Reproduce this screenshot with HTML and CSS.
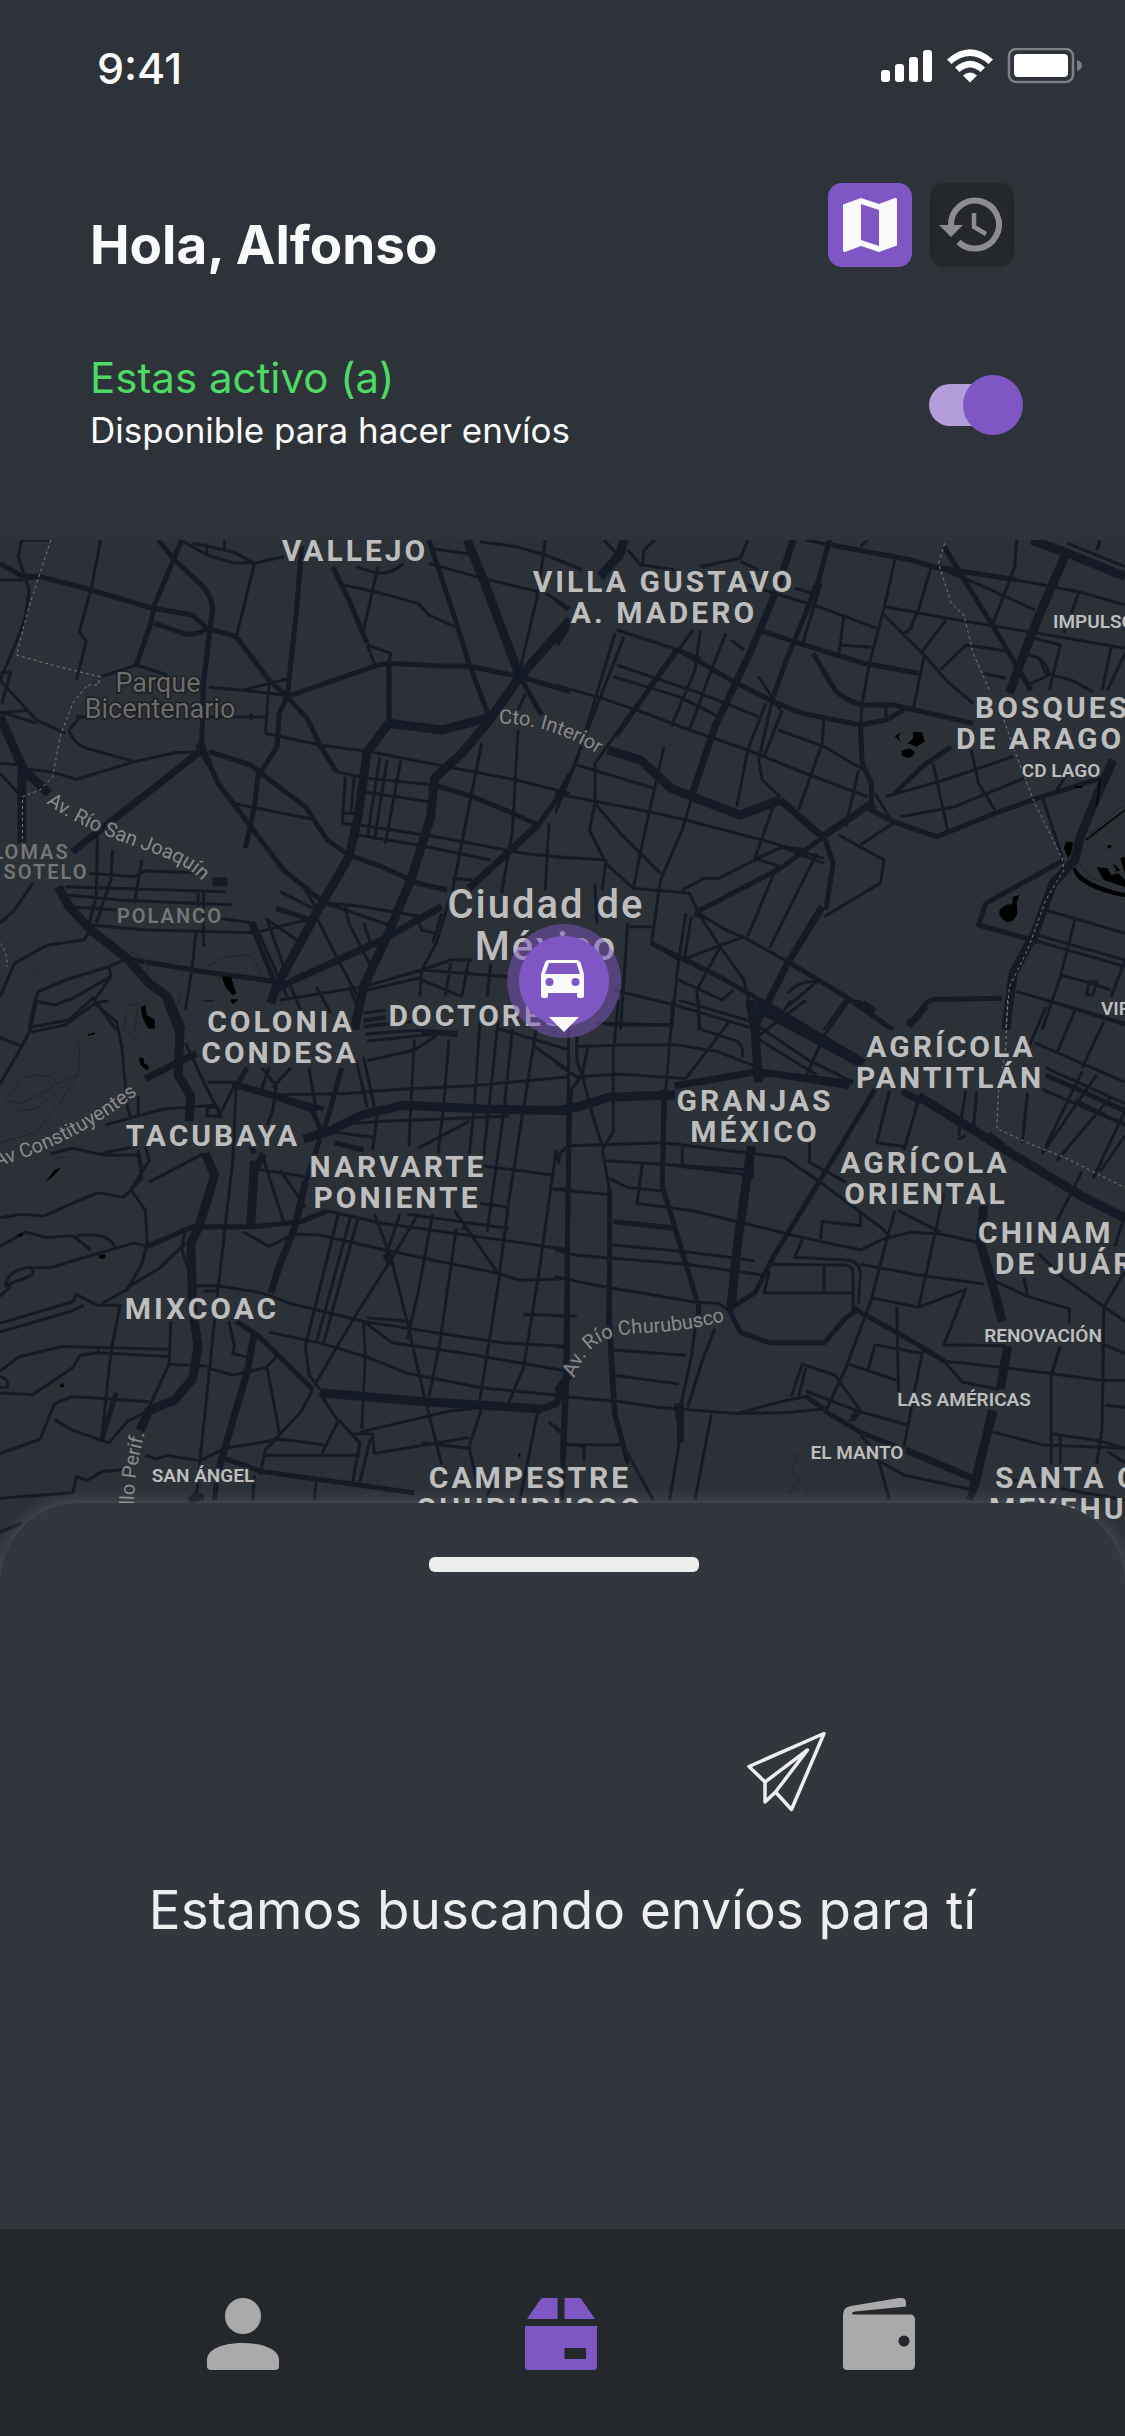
FILE: index.html
```html
<!DOCTYPE html>
<html lang="es">
<head>
<meta charset="utf-8">
<meta name="viewport" content="width=device-width, initial-scale=1">
<title>Envíos</title>
<link rel="stylesheet" href="styles.css">
</head>
<body>
<div class="app">
  <div class="status">
    <span class="status-time">9:41</span>
    <svg class="status-icons" viewBox="0 0 204 36" aria-hidden="true">
      <g fill="#fff">
        <rect x="1" y="22" width="9" height="12" rx="3"/>
        <rect x="15" y="16" width="9" height="18" rx="3"/>
        <rect x="29" y="9" width="9" height="25" rx="3"/>
        <rect x="43" y="2" width="9" height="32" rx="3"/>
        <path d="M67 11.500Q90 -9 113 11.500L108.500 16Q90 0 71.500 16Z"/>
        <path d="M75 19.500Q90 6 105 19.500L100.500 24Q90 15 79.500 24Z"/>
        <path d="M83 27.500Q90 21.500 97 27.500L90 34.500Z"/>
        <rect x="134" y="6" width="54" height="23" rx="4"/>
      </g>
      <rect x="129" y="1" width="64" height="33" rx="7" fill="none" stroke="#7d8086" stroke-width="2.500"/>
      <path d="M197 12Q202 14 202 17.500Q202 21 197 23Z" fill="#7d8086"/>
    </svg>
  </div>

  <header class="header">
    <div class="title-row">
      <h1 class="title">Hola, Alfonso</h1>
      <div class="view-buttons">
        <button class="view-btn view-btn-on" type="button" aria-label="Mapa">
          <svg viewBox="0 0 84 84"><path fill="#fafafa" d="M15 21.500 33 15 51 21 67 15Q69 14.500 69 16.500V62.500L51 69 33 63 17 69Q15 69.500 15 67.500ZM33 21V57L51 63V27Z"/></svg>
        </button>
        <button class="view-btn" type="button" aria-label="Historial">
          <svg viewBox="0 0 84 84"><g fill="none" stroke="#8e8c92" stroke-width="6"><path d="M21 43V42A24 24 0 1 1 28.500 59"/><path stroke-width="4.500" d="M44 30V44L56 51"/></g><path fill="#8e8c92" d="M9 42H33L21 54Z"/></svg>
        </button>
      </div>
    </div>
    <div class="state-row">
      <label class="state" for="active">
        <span class="state-name">Estas activo (a)</span>
        <span class="state-note">Disponible para hacer envíos</span>
      </label>
      <input class="switch" id="active" type="checkbox" role="switch" checked>
    </div>
  </header>

  <main class="main">
    <svg class="map" viewBox="0 540 1125 1060" preserveAspectRatio="xMidYMin slice" role="img" aria-label="Mapa de la Ciudad de México">
      <rect y="540" width="1125" height="1060" fill="#2c3037"/>

      <!-- north-west -->
      <svg x="0" y="530" width="570" height="500" viewBox="0 0 1568 1500" preserveAspectRatio="none">
        <g class="road w3">
          <path d="M60 30 50 80 80 180 70 260 40 350M60 30H140M277 30 250 180 218 305 237 335 210 450M700 100 650 320M505 35 570 75 640 98 700 100 780 80M568 40V75M530 40 640 65 700 100M617 30V60"/>
          <path d="M0 150 60 150 110 140M0 450 100 570 180 610M0 550 80 540M0 545 100 580M40 350 0 450M30 425 0 430M30 425 5 520"/>
          <path d="M280 440 375 405 460 435M1040 110 1000 300M945 165 1030 185 1150 220 1180 255 1250 290M1035 130 980 110M1040 130Q1080 130 1110 100M1180 55 1290 72M1180 100 1310 140 1480 185M1320 35 1420 50 1500 75 1568 105M1500 30 1480 190 1430 420M1500 190 1568 235"/>
          <path d="M1010 345 1075 370 1070 400M1010 345 1030 400M575 472 680 482 780 495M660 482 790 447M740 460 730 610M570 560H735M690 550V570M730 610 880 645 1020 665 1230 710 1420 750 1568 790"/>
          <path d="M220 560 190 600Q200 640 240 655L370 695 480 668 560 665M370 695 210 748 140 725 70 718M0 700 60 705M0 730 60 800M210 560 250 560"/>
          <path d="M925 725 1010 745 1195 765M950 740 942 880 990 888M975 740 965 850M945 850 985 850M1045 680 1010 925M1065 690 1030 930M1103 690 1060 940M1000 785 1180 815M990 885 1200 920 1440 970 1568 985M985 915 1150 945 1350 990M640 820 870 870"/>
          <path d="M1325 640 1290 830 1245 1080M1425 600 1410 900 1380 1090M1445 490 1425 540M1510 880 1500 1080M1245 1045 1300 1050M1245 1080 1200 1240 1160 1320"/>
          <path d="M268 910 265 1100 240 1200M310 960 305 1050 265 1180M390 990 370 1120M245 1030 370 1040 400 1022 560 1030M180 1070 620 1085M185 1095 330 1110 640 1125M190 1130 320 1140M560 1085 560 1250M545 1090 545 1130M600 1165 700 1180 790 1400M735 1170 790 1340M730 1165 830 1240M770 1085 870 1140M840 1080 880 1150M910 1120 1000 1130 1160 1160M910 1125 1070 1185M870 1160 930 1290 985 1400M950 1130 960 1180 1030 1330M1000 1180 1020 1240M1150 1170 1160 1200 1195 1210M1215 1150 1190 1240"/>
          <path d="M0 1180 40 1140 90 1060M0 1400 40 1300 130 1245 230 1230 250 1200M340 1290 300 1310 180 1350 105 1385 90 1440 80 1500M300 1310 305 1340 200 1405 150 1425 105 1415M305 1340 260 1410 300 1470 320 1500M260 1400 190 1470 90 1490"/>
          <path d="M250 1185 400 1200 700 1208 860 1165M540 1200 530 1300 510 1440M770 1410 1000 1370 1160 1320 1240 1290 1300 1290M1160 1320 1400 1340M1010 1380 1150 1345 1270 1400M1160 1320 1155 1400M1240 1300 1225 1400M1290 1290 1270 1400M1350 1300 1340 1400M800 1370 850 1500M870 1370 910 1450M960 1370 980 1420"/>
          <path d="M1000 1450 1060 1440M1000 1470 1060 1460M1000 1490 1060 1480"/>
        </g>
        <g class="road w5">
          <path d="M435 30 480 90 550 160Q585 200 585 240L575 320 560 460 555 640 575 700 600 760 690 890 780 1020 870 1100 910 1125M500 30 425 225 415 280 375 405M425 280 510 312Q550 315 570 295"/>
          <path d="M0 100 60 138 110 140 190 162 250 180 420 235 530 255 570 295 650 320 740 450 790 500 845 565 880 645 925 725"/>
          <path d="M790 500 1040 405 1070 400 1200 407 1290 408 1430 440 1568 485M1180 30 1250 260 1290 400 1345 560M915 110 960 210 1010 340M830 50 815 250 790 500 768 550 762 650 710 740 700 830 675 955M1070 400V580"/>
          <path d="M575 665 690 705 760 765 840 830 900 930 960 975 1050 1010 1150 1060 1230 1080M1430 440 1490 555M1195 765 1300 800 1400 845 1480 885 1530 810 1568 730"/>
          <path d="M340 1285 560 1325 760 1355M690 1180 760 1370M760 1135 870 1175"/>
        </g>
        <g class="road w7">
          <path d="M555 660 440 760 310 870 200 965M1480 885 1330 1035 1290 1075M1215 1130 1050 1230 930 1290 800 1355 760 1380M545 640 575 700"/>
        </g>
        <g class="road w9">
          <path d="M1285 30 1330 150 1430 440M1568 270 1430 440 1340 580 1270 670 1195 745 1185 860 1130 1050 1060 1230 1000 1370 975 1500M1340 565 1215 600 1070 580 1010 665 985 860 960 980 870 1150 800 1290 760 1370 745 1420M0 560 65 720 135 790M60 720V940M160 1070 190 1130 250 1200 350 1285 410 1360 460 1400 500 1500"/>
          <path d="M585 1055H625"/>
        </g>
        <g class="border"><path d="M140 30 80 230 45 375 160 410 275 440 270 465 240 465 200 520 165 620 145 740 110 780 62 800V940M0 1240Q20 1260 20 1310"/></g>
        <g class="water"><path d="M610 1340H635L650 1390 640 1395 620 1370ZM635 1408H655L645 1418 635 1415ZM388 1430 400 1425 403 1455 425 1470V1495H408L392 1460Z"/></g>
        <g class="trail"><path d="M570 1310 620 1280 690 1275 720 1330M340 1430 380 1420 370 1500M80 1310 105 1330M350 1260 400 1290 410 1320 370 1350M480 1370 500 1390 490 1420"/></g>
      </svg>

      <!-- north-east -->
      <svg x="555" y="530" width="570" height="500" viewBox="0 0 1568 1500" preserveAspectRatio="none">
        <g class="road w3">
          <path d="M0 85 75 120M135 30 185 90M275 30 245 60 240 110M200 60 240 110M240 105 330 120M400 110 510 85 530 30M510 95 560 120M0 210 35 240M530 165 725 230 885 295M660 175 710 190 730 165 680 345M715 165 660 330"/>
          <path d="M840 50 860 30M690 30 760 45M935 90 905 235 865 400 845 520 840 590M910 230 1080 265 1330 310 1568 355M905 255 1020 380 1080 455 1150 520M1035 110 1000 240 970 310M985 290 960 310M795 255 780 380M785 345 870 352M1075 270 1010 365M1130 345 1060 420M1130 345 1240 362M1015 380 985 540"/>
          <path d="M1040 105 1200 180 1320 240M1270 30 1265 110 1205 280M1270 150 1440 185 1568 225M1440 190 1400 310M1500 30 1490 60M1410 40 1568 110M1320 325 1390 345 1360 480M1300 375Q1350 380 1360 435L1300 465M1330 380 1350 430 1420 450 1480 485M1530 350 1505 480M1568 370 1520 480M1180 430 1240 445M1280 430 1305 480"/>
          <path d="M170 300 340 360 400 385M165 310 60 690 0 850M190 320 100 570 30 770M170 405 400 490 560 560M160 440 340 500 450 560M330 360 240 500 110 700 110 820M380 300 300 420 170 620M400 300 385 420 320 590M470 310 430 420 370 600M485 330 520 360"/>
          <path d="M0 465 130 505 250 550 370 600 530 660 700 735 860 800M60 705 275 775M20 795 260 845 360 870 570 930 740 985M110 820 95 900 140 1000 220 1080M110 820 180 910 290 1030M0 980 140 990 130 1080"/>
          <path d="M560 440 620 540M580 520 530 660 500 830M640 380 600 500 560 690 570 750 620 800M625 540 575 680M615 600 740 650 850 720M740 560 735 640 670 840M275 770 240 940 215 1080M380 790 350 900 290 1050 265 1240M300 650 275 770M600 830 550 985 620 1010M550 985 630 950M620 950 740 1000"/>
          <path d="M215 1075 370 1090 395 1150M350 1080 410 1045 450 1045 550 990 625 950 700 960M720 970 590 1255M610 1010 530 1220M835 720 800 890M880 790 930 880 840 945M780 915 905 990 895 1060 740 1160M910 800 1070 750 1260 680M950 860 1100 830 1290 745M1040 700 1080 900M1145 660 1165 760 1210 840M1340 800 1395 980M1380 780 1410 730M910 560 910 530"/>
          <path d="M1350 1140 1568 1210M1430 1170 1390 1340 1340 1500M1330 1235 1568 1310M1310 1210 1568 1290M1390 1335 1460 1355 1530 1380M1470 1355H1490L1480 1395H1462ZM1568 1290 1530 1400M1270 1385 1400 1425 1568 1480"/>
          <path d="M395 1150 470 1200 525 1225 640 1295M360 1150 340 1290M375 1160 355 1290M520 1220 360 1285M460 1240 390 1380M395 1150 460 1260 520 1350 550 1500M340 1350 460 1410 490 1380M390 1380 400 1500M205 1190H265M340 1290 320 1500M200 1180 180 1500M115 1180 110 1060M265 1240 340 1290M640 1390Q670 1350 720 1355L640 1430M110 1480 320 1485M160 1380 330 1425 560 1500M800 1410 740 1500"/>
        </g>
        <g class="road w5">
          <path d="M755 30 720 170 640 380 600 500M560 300 700 350 850 400 1000 430M710 370 770 480Q800 515 850 525L930 525 1150 580M340 360 500 460 600 515 680 550 840 585 910 570 960 540M840 585 845 700 870 760 870 830M760 45 980 90 1040 110 1270 150M1070 50 1200 280 1310 480M935 790 1010 710 1090 650M870 840 930 875 1050 920 1210 850 1340 800 1500 745M740 920 620 1015 400 1140M1400 990 1185 1120 1165 1185 1330 1235"/>
          <path d="M640 1295 800 1400 930 1500M740 920 765 1000 745 1140M975 1490 1020 1420Q1030 1408 1060 1408L1230 1405M0 790 20 790M265 1240 460 1345 580 1420 700 1500"/>
        </g>
        <g class="road w7">
          <path d="M655 30 610 180 540 360 440 590 375 800M620 810 735 920 790 880 870 820M735 1130 690 1210 640 1300 580 1430 545 1500M845 1420 880 1445M970 1485 985 1470"/>
        </g>
        <g class="road w9">
          <path d="M190 30 180 70 125 140M30 290 0 340M145 660 235 690 320 775 400 810 510 855 620 810M1310 30 1400 65 1568 140M1410 60 1330 260 1280 400 1250 490M1535 690 1490 800 1445 920 1430 990 1370 1060 1320 1210 1260 1330 1240 1500M860 815 875 840M385 1145 400 1150"/>
        </g>
        <g class="border"><path d="M1072 40 1055 100 1090 220 1125 255 1150 370 1195 480M1235 570 1270 680 1320 820 1395 985 1400 1020 1350 1110 1300 1260 1250 1370 1240 1500"/></g>
        <g class="water">
          <path d="M985 605 1010 607 1017 635 995 650 970 640 985 625ZM935 620 950 607 945 622 952 635ZM952 662 975 655 990 665 985 678 970 685 955 678ZM1405 935 1425 935 1420 970 1412 985 1400 955ZM1260 1100 1278 1095 1270 1115 1272 1150Q1265 1175 1245 1177 1222 1165 1222 1145 1228 1125 1258 1122ZM1430 1010Q1450 1060 1568 1090V1102Q1440 1075 1425 1020ZM1490 1012 1520 1015 1530 1035 1550 1030 1568 1050V1072L1510 1050ZM1535 1000 1555 1020 1545 1025ZM1555 985 1568 980V1030ZM1520 945H1530V955H1520ZM1430 768H1450V774H1430Z"/>
          <path class="shore" d="M1460 930 1568 840M1500 745 1490 830"/>
        </g>
        <g class="trail"><path d="M1445 1000Q1460 1040 1500 1055M1475 910 1568 820"/></g>
      </svg>

      <!-- south-west -->
      <svg x="0" y="1000" width="570" height="560" viewBox="0 0 1568 1568" preserveAspectRatio="none">
        <g class="road w3">
          <path d="M100 0 85 80 60 130 0 235M0 105 60 130M85 90 180 70 260 10 320 60 335 130 350 300 360 330 450 305 590 295M380 270V320M300 0 260 10M360 330 290 350"/>
          <path d="M510 120 570 250 610 330M570 230H650L600 330M570 300H600V325H570ZM650 240 640 450 600 810M680 190 650 240M720 190 760 240 750 310 735 350M740 190 720 250M800 190 750 245M850 190 870 310M1000 160 1030 300M980 170 1010 300"/>
          <path d="M1000 60 1060 50M1005 75 1130 60M1005 95 1150 85 1260 90M1010 115 1200 95M1010 170 1140 140 1200 100M1160 90 1260 100M1140 110 1130 300 1125 410M1235 110 1220 300 1205 430M1320 60 1305 300 1290 440M1370 60 1345 300 1330 440M1410 80 1385 320 1340 650M1475 80 1450 240 1400 560 1370 800 1320 1120M1370 80 1568 140M1470 130 1568 200M760 265 950 262 1100 250 1300 240 1568 215"/>
          <path d="M920 350 1040 340 1300 330 1400 325M920 370 1030 385M1040 300 1025 420M1150 415 1290 340M1530 420 1480 780 1440 1030 1400 1125M1568 410Q1540 420 1530 450M1330 465 1520 490M1520 530H1568M1320 570 1400 580"/>
          <path d="M0 610 60 600 120 605 220 560 270 540 340 552 390 500 380 435 290 435 200 415 140 430M380 420 390 470M400 410 410 450 360 530 400 590 405 680 390 740 350 810 280 850M410 510 560 430M405 690 370 680 200 730 140 750 70 750Q20 760 15 800L90 770V750M0 690 70 650 130 665 200 660 250 700M210 660Q300 650 315 690M0 830 30 800"/>
          <path d="M510 640 500 700 530 790M510 680 440 750 350 805M280 430 370 410M670 650 740 690 800 660M800 655 880 658 1060 700 1200 730 1370 765 1430 785 1568 780M590 0 560 0M720 430 780 620M770 475 840 580M715 475 840 495"/>
          <path d="M930 600 840 970 850 1050 880 1090M965 605 870 960M985 610 890 960M900 590 1050 625 1230 650 1568 700M1100 600 1060 720M1150 600 1080 720 980 880 870 1070M1030 600 1075 720 1120 900 1160 1080 1215 1300M1190 600 1150 820 1120 950M1255 640 1210 960 1180 1110M1250 590 1370 765M1120 600 1400 640M1290 640 1270 640"/>
          <path d="M540 800 600 800 720 820 800 850 1000 900 1380 960 1568 970M560 815 600 815M740 930 880 960 1010 1000 1120 1045 1320 1085 1568 1110M1010 890 1130 900M1000 900 1080 960 1280 990 1568 1040M1440 880 1568 885M1000 900 1005 1000 995 1200M630 900 645 970 640 990 680 1000M570 1030 640 1050 730 1030 760 1000M735 1030 770 1220"/>
          <path d="M0 905 200 845 210 825 270 855H330L310 960 300 1030 280 1230M0 930 200 870 230 855M470 900 465 1020M0 1040 50 1000 170 970 465 978M0 1100 90 1105 200 1030 220 995 270 988 465 998M270 970V990M0 1055Q25 1060 20 1085H0M465 1020 570 1025M465 1020 410 1140M0 1270 110 1230 150 1130 200 1110 410 1125M150 1175 200 1205 300 1240 350 1180 410 1150"/>
          <path d="M0 1395 200 1380 210 1335 240 1345 280 1320 340 1315M400 1275 430 1285 460 1275 550 1290 620 1255 770 1230 890 1245M600 800 580 1000 550 1290 540 1400M520 1400 545 1370M700 1330 695 1400M870 1350 865 1400M730 1275H990M860 1090 830 1150 730 1260 715 1330M880 1100 930 1180 885 1270M930 1175 990 1240 970 1350M1020 1225 990 1350M970 1215H1025L1030 1270 1290 1225M990 1210 1240 1150 1300 1145M1160 1240 1290 1255M1330 1130 1290 1250 1310 1340M1480 1150 1430 1400M1510 1180 1540 1210M0 1490 60 1465M1340 1390 1360 1340"/>
        </g>
        <g class="road w5">
          <path d="M640 235 760 270 890 305M680 190 650 240M940 190 910 300 890 370M850 290 890 380M560 430 590 490 570 560 545 640M530 635 405 690M530 635 700 635 830 620 900 590M700 430 690 410M840 510 810 640 770 740 745 820M700 930 680 1040 600 1320 590 1400M650 900 710 940 860 1090M720 1320 860 1340 1140 1380M620 1285 720 1320M920 400 1000 420M880 390 840 510"/>
          <path d="M1568 0 1560 1050 1545 1400M320 1100 280 1230"/>
        </g>
        <g class="road w7">
          <path d="M400 220 540 150M640 235 760 270 870 310M725 430 700 480 690 620M1568 1040 1530 1130 1490 1145M520 1400 560 1390M1060 710 1075 740M840 510 810 640 770 740 745 820M700 930 680 1040 600 1320"/>
        </g>
        <g class="road w9">
          <path d="M460 0 495 90 490 210 525 270 520 340M565 430 590 490 570 560 545 640 525 680 530 870 545 970 530 1060 480 1120 410 1150 385 1205M880 1100 1170 1125 1330 1135 1490 1145M835 390 910 365 1000 320 1110 295 1330 305 1568 310M700 450 690 630"/>
        </g>
        <g class="water"><path d="M388 20 400 15 403 42 425 55V80H408L392 50ZM383 160 395 163 397 178 410 185 405 198 395 190 385 180ZM238 98 260 90 262 95 245 100ZM125 510 150 475 167 470 150 490ZM45 660 60 652 60 662ZM272 714 290 712 288 724 274 724ZM163 1082 172 1072 178 1084ZM635 0H655L640 12ZM1425 1272 1432 1270 1430 1282Z"/></g>
        <g class="trail"><path d="M190 100 220 120 215 210 170 280 100 370 0 400M15 280 60 220 100 210 140 215 160 235 215 205M15 280 60 290 150 240M350 30 340 80 370 110 380 90M50 310 100 305 210 210M150 440 190 440"/></g>
      </svg>

      <!-- south-east -->
      <svg x="555" y="1000" width="570" height="560" viewBox="0 0 1568 1568" preserveAspectRatio="none">
        <g class="road w3">
          <path d="M60 100 60 170 75 210 45 250 40 400 30 1000M175 0 160 150 160 370 130 420 150 530 145 900 160 1150 200 1300M325 0 305 250 295 520 340 680 395 850M60 130 200 125 330 125 450 145 560 190M140 70H320M0 175 60 215 180 208 360 220M90 130 75 210 100 310 130 410M395 0 395 80 500 115Q520 130 515 160M480 60 360 220M0 1190 20 1215"/>
          <path d="M340 0 540 60 700 170 820 230M650 0 630 30M690 0 560 100M810 0 740 100 690 215M560 110 720 210"/>
          <path d="M10 460Q10 420 40 408L300 400 540 430 630 440 730 510 900 640 920 660M140 450 300 460 520 475M300 460 520 488M350 410V470M240 460 225 575M150 500 200 525 300 535M0 530 150 545M225 570 380 590 500 620 660 660 840 700 900 670 980 650 1060 655 1170 680M160 620 330 635"/>
          <path d="M155 685 360 705 550 730M0 700 60 715 360 740 570 770M0 775 120 800 380 845 450 850 480 870M0 885 60 885M700 400 700 455 800 510M920 255 885 400 960 410M1000 280 960 420M1130 255 1110 380M1160 255 1150 370M1300 260 1285 400M1340 250 1568 350"/>
          <path d="M680 670 660 720 800 728Q840 730 840 770L835 850M590 740 800 742Q820 745 820 770V870M740 740V820M590 760 575 820H820M730 670 735 620 840 632 840 590M840 740 1000 770 1180 795M935 590 905 700 870 840 800 1030 745 1150M945 590 1060 650M1070 540 1020 770 1000 860M1110 390 1130 380"/>
          <path d="M875 835 1000 860 1040 845 1130 810 1070 965 1240 968M1170 680 1200 790M1195 780 1300 830 1415 865V905M1290 780 1300 830M1330 710 1400 780 1568 900M1568 760 1510 860 1505 1200 1490 1300M940 860 945 1100M850 880 940 930M880 965 860 1040M880 965 1010 990 990 1090 960 1250M810 1020 940 1065M1010 980 1070 1010 1120 1070 1220 1090"/>
          <path d="M1060 1010 1240 1030 1360 1045 1500 1065 1568 1065M1390 970 1365 1050V1300M1390 1220V1300M1205 1210 1340 1245 1568 1255 1500 1235 1370 1215M1515 1135 1568 1140M1500 960 1568 990M1240 1340 1568 1400M1568 1295 1520 1265"/>
          <path d="M160 980 360 995M155 1050 340 1075M395 850 375 1000 340 1160M440 920 405 1010 365 1140M20 1110 180 1125 280 1140 500 1158 620 1125 700 1108M500 1158 640 1155 740 1145M650 1110 680 1020 770 1050 840 1150 820 1180M670 1110 690 1030M690 1095 830 1150 970 1190M830 1150 810 1180M0 970 40 975M20 1240 80 1250V1290M30 1245H180M160 1150 180 1230 200 1300M840 1220 870 1250M890 1290 960 1330 1140 1370M890 1290 920 1400"/>
          <path d="M1320 120 1568 230M1350 20 1300 140M1430 30 1380 150M1510 60 1450 190M1350 190 1568 290M1490 210 1340 430M1530 270 1380 450M1568 310 1480 500M1450 200 1350 410M1450 480 1380 620M1568 380 1500 480M1350 0 1568 70M1570 350 1430 280M1568 600 1540 690"/>
          <path d="M430 1160 385 1400M330 1130 345 1220 315 1400M200 1270 270 1400"/>
        </g>
        <g class="road w5">
          <path d="M880 250 720 520 600 720 550 820 480 865M480 870 510 930 590 960H740L800 890 830 870M850 880 990 960 1070 1010M740 1150 840 1210 960 1260M395 850V880M690 1110 740 1145M160 620 330 640M540 430 540 500M820 860 855 885M1350 210 1568 310M820 230 600 205 550 215M40 250 30 1000 20 1290M150 530 150 900 165 1160 200 1290M300 250 295 520 390 840"/>
        </g>
        <g class="road w7">
          <path d="M330 240 560 200 810 240M550 20 840 180M955 255 1000 280M480 870 500 700 540 410M965 1260 1150 1340M820 0 870 30M985 60 1020 15M0 1100 40 1050M1200 1150 1160 1350 1140 1400M560 0 850 175M345 1130V1240"/>
        </g>
        <g class="road w9">
          <path d="M535 0 550 80 560 230M0 310 60 300 150 272 330 265M1000 270 1240 420 1450 550 1568 610M1180 570 1170 680 1210 820 1230 900M1245 970 1225 1090M1205 1150 1150 1370M570 30 560 0M1230 410 1190 380M540 410 500 700 485 860"/>
        </g>
        <g class="border"><path d="M1245 0 1240 130 1220 260 1215 360 1300 400 1400 440 1568 525"/></g>
        <g class="trail"><path d="M640 1270 665 1275 650 1320 670 1340 645 1380 670 1370M680 1370 700 1375 690 1385M180 1240 270 1390"/></g>
      </svg>

      <defs>
        <path id="st-interior" d="M499 724Q550 722 606 759"/>
        <path id="st-joaquin" d="M46 803C95 840 160 850 188 869Q204 880 214 895"/>
        <path id="st-const" d="M-4 1167C45 1153 95 1130 154 1081"/>
        <path id="st-perif" d="M134 1505Q134 1463 152 1410"/>
        <path id="st-churu" d="M574 1378C590 1340 605 1336 640 1333Q690 1332 735 1318"/>
      </defs>
      <g class="lbl lbl-street">
        <text><textPath href="#st-interior">Cto. Interior</textPath></text>
        <text><textPath href="#st-joaquin">Av. Río San Joaquín</textPath></text>
        <text><textPath href="#st-const">Av Constituyentes</textPath></text>
        <text><textPath href="#st-perif">llo Perif.</textPath></text>
        <text><textPath href="#st-churu">Av. Río Churubusco</textPath></text>
      </g>
      <g class="lbl lbl-park">
        <text x="158" y="692">Parque</text><text x="160" y="718">Bicentenario</text>
      </g>
      <g class="lbl lbl-faint">
        <text x="31" y="859">LOMAS</text><text x="46" y="879">SOTELO</text><text x="170" y="923">POLANCO</text>
      </g>
      <g class="lbl lbl-city">
        <text x="546" y="918">Ciudad de</text><text x="546" y="960">México</text>
      </g>
      <g class="lbl lbl-area">
        <text x="355" y="561">VALLEJO</text>
        <text x="664" y="592">VILLA GUSTAVO</text><text x="664" y="623">A. MADERO</text>
        <text x="477" y="1026">DOCTORES</text>
        <text x="281" y="1032">COLONIA</text><text x="280" y="1063">CONDESA</text>
        <text x="213" y="1146">TACUBAYA</text>
        <text x="398" y="1177">NARVARTE</text><text x="397" y="1208">PONIENTE</text>
        <text x="202" y="1319">MIXCOAC</text>
        <text x="530" y="1488">CAMPESTRE</text><text x="530" y="1519">CHURUBUSCO</text>
        <text x="755" y="1111">GRANJAS</text><text x="755" y="1142">MÉXICO</text>
        <text x="951" y="1057">AGRÍCOLA</text><text x="950" y="1088">PANTITLÁN</text>
        <text x="925" y="1173">AGRÍCOLA</text><text x="926" y="1204">ORIENTAL</text>
      </g>
      <g class="lbl lbl-area lbl-start">
        <text x="975" y="718">BOSQUES</text><text x="956" y="749">DE ARAGO</text>
        <text x="978" y="1243">CHINAM</text><text x="995" y="1274">DE JUÁR</text>
        <text x="995" y="1488">SANTA C</text><text x="989" y="1519">MEYEHU</text>
      </g>
      <g class="lbl lbl-small">
        <text x="203" y="1482">SAN ÁNGEL</text><text x="1061" y="777">CD LAGO</text>
        <text x="1043" y="1342">RENOVACIÓN</text><text x="964" y="1406">LAS AMÉRICAS</text><text x="857" y="1459">EL MANTO</text>
      </g>
      <g class="lbl lbl-small lbl-start">
        <text x="1053" y="628">IMPULSO</text><text x="1101" y="1015">VIP</text>
      </g>

      <!-- courier position -->
      <g transform="translate(564 981)">
        <circle r="57" fill="#7e57c2" fill-opacity=".5"/>
        <circle r="45" fill="#7e57c5"/>
        <path fill="#fafafa" fill-rule="evenodd" d="M-16 -21H13Q15.500 -21 16.500 -18.500L20 -7V15Q20 17 18 17H15Q13 17 13 15V12H-16V15Q-16 17 -18 17H-21Q-23 17 -23 15V-7L-19 -18.500Q-18 -21 -16 -21ZM-15 -18 -19 -7H16L12.500 -18ZM-14.500 -3A4 4 0 1 0 -14.500 5 4 4 0 1 0 -14.500 -3ZM11.500 -3A4 4 0 1 0 11.500 5 4 4 0 1 0 11.500 -3Z"/>
        <path fill="#fafafa" d="M-15 36H15L0 51Z"/>
      </g>
    </svg>

    <section class="sheet">
      <div class="handle"></div>
      <svg class="plane" viewBox="0 0 84 84" aria-hidden="true">
        <path fill="none" stroke="#eee" stroke-width="3.500" stroke-linejoin="round" stroke-linecap="round" d="M79 3.500 4 36.500 20 52V72L30.500 62 46.500 79.500ZM20 52 62.500 20 30.500 62"/>
      </svg>
      <p class="message">Estamos buscando envíos para tí</p>
    </section>
  </main>

  <nav class="tabs" aria-label="Principal">
    <a class="tab" href="#perfil" aria-label="Perfil">
      <svg viewBox="0 0 72 72"><circle cx="36" cy="18" r="18"/><path d="M4 72Q0 72 0 68V62C0 51 16 45 36 45S72 51 72 62V68Q72 72 68 72Z"/></svg>
    </a>
    <a class="tab tab-on" href="#envios" aria-label="Envíos" aria-current="page">
      <svg viewBox="0 0 72 72"><path d="M2 21 15 2Q16 0 18 0H32.500V21ZM39.500 0H54Q56 0 57 2L70 21H39.500Z"/><path fill-rule="evenodd" d="M0 28H72V69Q72 72 69 72H3Q0 72 0 69ZM39.500 50V61H61V50Z"/></svg>
    </a>
    <a class="tab" href="#cartera" aria-label="Cartera">
      <svg viewBox="0 0 72 72"><path fill-rule="evenodd" d="M0 17Q0 9 8 8L56 0Q63 -1 63 5V8.500L12 13.500Q9 14 9 15T10 16.500H67Q72 16.500 72 22V67Q72 72 67 72H4Q0 72 0 68ZM61 37.500A5.500 5.500 0 1 0 61 48.500 5.500 5.500 0 1 0 61 37.500Z"/></svg>
    </a>
  </nav>
</div>
</body>
</html>
```
FILE: styles.css
```css
* { box-sizing: border-box; }

body {
  margin: 0;
  background: #2e3239;
  color: #fafafa;
  font-family: Inter, "Liberation Sans", sans-serif;
}

.app {
  display: flex;
  flex-direction: column;
  min-height: 100vh;
}

/* status bar */
.status {
  display: flex;
  justify-content: space-between;
  align-items: flex-start;
  padding: 40px 41px 0 97px;
  height: 132px;
}
.status-time {
  font-size: 43px;
  font-weight: 500;
  line-height: 56px;
}
.status-icons {
  width: 204px;
  height: 36px;
  margin-top: 8px;
}

/* header */
.header {
  padding: 51px 102px 84px 90px;
}
.title-row,
.state-row {
  display: flex;
  justify-content: space-between;
}
.title-row { padding-right: 9px; }
.title {
  margin: 29px 0 0;
  font-size: 53px;
  font-weight: 700;
  line-height: 66px;
}
.view-buttons {
  display: flex;
  gap: 18px;
}
.view-btn {
  width: 84px;
  height: 84px;
  padding: 0;
  border: 0;
  border-radius: 14px;
  background: #24272b;
}
.view-btn-on { background: #7e57c5; }
.view-btn svg { display: block; }

.state-row { margin-top: 74px; }
.state {
  display: flex;
  flex-direction: column;
}
.state-name {
  color: #4cd964;
  font-size: 42px;
  line-height: 52px;
}
.state-note {
  font-size: 35px;
  font-weight: 400;
  line-height: 52px;
}
.switch {
  appearance: none;
  position: relative;
  width: 94px;
  height: 42px;
  margin: 32px 0 0;
  border-radius: 21px;
  background: linear-gradient(#b39ddb, #b39ddb) left / 84px 100% no-repeat;
}
.switch::after {
  content: "";
  position: absolute;
  top: -9px;
  right: 0;
  width: 60px;
  height: 60px;
  border-radius: 50%;
  background: #7e57c5;
}

/* map */
.main {
  display: flex;
  flex: 1;
  flex-direction: column;
}
.map {
  display: block;
  width: 100%;
}
.road {
  fill: none;
  stroke: #151b26;
  stroke-linejoin: round;
}
.road path,
.border path,
.trail path,
.shore { vector-effect: non-scaling-stroke; }
.w3 { stroke-width: 3px; }
.w5 { stroke-width: 5px; }
.w7 { stroke-width: 7px; }
.w9 { stroke-width: 9px; }
.border {
  fill: none;
  stroke: #777a7e;
  stroke-width: 1px;
  stroke-dasharray: 3 3;
}
.trail {
  fill: none;
  stroke: #20252d;
  stroke-width: 1px;
}
.water { fill: #000; }
.shore {
  fill: none;
  stroke: #0a0c10;
  stroke-width: 2px;
}
.lbl {
  font-family: Roboto, "Liberation Sans", sans-serif;
  font-weight: 600;
  text-anchor: middle;
  fill: #bdbdbd;
  stroke: #2c3037;
  stroke-width: 3px;
  paint-order: stroke;
}
.lbl-area {
  font-size: 30px;
  font-weight: 700;
  letter-spacing: 3px;
}
.lbl-city {
  font-size: 40px;
  font-weight: 500;
  letter-spacing: 2px;
}
.lbl-faint {
  font-size: 20px;
  letter-spacing: 2px;
  fill: #757575;
}
.lbl-small { font-size: 19px; }
.lbl-park {
  font-size: 27px;
  font-weight: 400;
  fill: #6b6b6b;
  stroke: #1c1e20;
}
.lbl-street {
  font-size: 20px;
  font-weight: 400;
  fill: #8a8a8a;
}
.lbl-start,
.lbl-street { text-anchor: start; }

/* bottom sheet */
.sheet {
  position: relative;
  display: flex;
  flex: 1;
  flex-direction: column;
  align-items: center;
  margin-top: -97px;
  padding: 54px 80px;
  border-radius: 80px 80px 0 0;
  background: #32363d;
  box-shadow: 0 0 18px rgba(255, 255, 255, .2);
}
.handle {
  width: 270px;
  height: 15px;
  margin-left: 3px;
  border-radius: 6px;
  background: #eee;
}
.plane {
  width: 84px;
  height: 84px;
  margin: 158px 0 0 449px;
}
.message {
  margin: 60px 0 0;
  color: #eee;
  font-size: 53px;
  font-weight: 400;
  line-height: 72px;
  text-align: center;
}

/* tab bar */
.tabs {
  position: relative;
  display: grid;
  grid-template-columns: repeat(3, 1fr);
  height: 207px;
  padding: 69px 87px 0 84px;
  background: #24272b;
}
.tab {
  justify-self: center;
  width: 72px;
  height: 72px;
  fill: #aaa;
}
.tab-on { fill: #7e57c5; }
.tab svg { display: block; }
```
